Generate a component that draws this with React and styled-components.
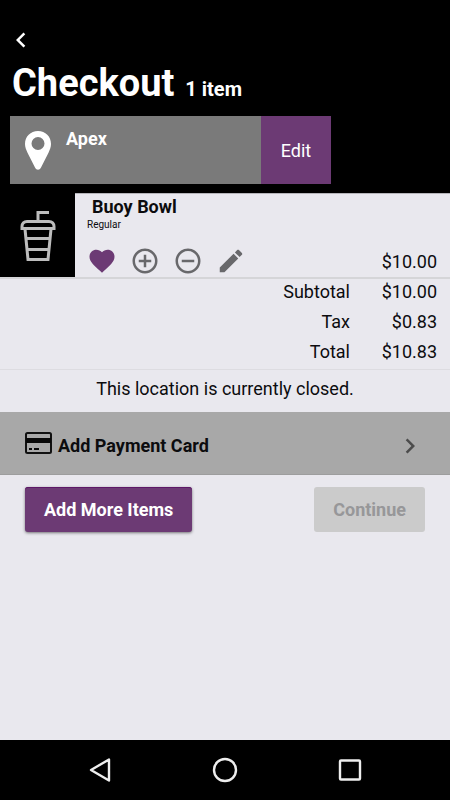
import React from "react";
import styled, { createGlobalStyle } from "styled-components";

const purple = "#6c3a74";
const surface = "#e9e8ee";
const iconGrey = "#68686b";

const GlobalStyle = createGlobalStyle`
  *, *::before, *::after { box-sizing: border-box; }
  body {
    margin: 0;
    background: ${surface};
    color: #0c0c0e;
    font-family: Roboto, "Liberation Sans", sans-serif;
    font-size: 18px;
    line-height: 24px;
  }
  button { font: inherit; color: inherit; border: 0; padding: 0; background: none; cursor: pointer; }
  h1, h2, p { margin: 0; }
  svg { display: block; }
`;

const Screen = styled.div`
  min-height: 100vh;
  display: flex;
  flex-direction: column;
`;

const Header = styled.header`
  background: #000;
  color: #fff;
  padding: 25px 10px 9px;
`;

const BackButton = styled.button`
  display: block;
  margin-left: -4px;
`;

const TitleRow = styled.div`
  display: flex;
  align-items: baseline;
  gap: 11px;
  padding: 4px 2px 9px;
`;

const Title = styled.h1`
  font-size: 38px;
  line-height: 48px;
  font-weight: 700;
`;

const ItemCount = styled.span`
  font-size: 20px;
  font-weight: 700;
`;

const LocationCard = styled.section`
  display: flex;
  width: 75%;
  min-width: 320px;
  max-width: 321px;
  height: 68px;
  background: #7a7a7a;
`;

const LocationInfo = styled.div`
  flex: 1;
  display: flex;
  gap: 14px;
  padding: 11px 14px;
`;

const LocationName = styled.h2`
  font-size: 18px;
  line-height: 24px;
  font-weight: 700;
`;

const EditButton = styled.button`
  width: 70px;
  padding-top: 2px;
  background: ${purple};
`;

const OrderItem = styled.article`
  display: flex;
  border-bottom: 2px solid #d5d5d8;
`;

const Thumbnail = styled.div`
  width: 75px;
  height: 84px;
  display: flex;
  align-items: center;
  justify-content: center;
  background: #000;
`;

const ItemBody = styled.div`
  flex: 1;
  display: flex;
  flex-direction: column;
  justify-content: space-between;
  padding: 1px 13px 0 12px;
  border-top: 1px solid #b5b4b9;
`;

const ItemName = styled.h2`
  font-size: 18px;
  line-height: 24px;
  font-weight: 700;
  padding-left: 5px;
`;

const ItemOption = styled.p`
  font-size: 10px;
  line-height: 12px;
`;

const ItemFooter = styled.div`
  display: flex;
  justify-content: space-between;
  align-items: center;
`;

const Actions = styled.div`
  display: flex;
  gap: 13px;
  padding-bottom: 1px;
`;

const IconButton = styled.button`
  color: ${(p) => (p.$active ? purple : iconGrey)};
`;

const Totals = styled.table`
  width: 100%;
  border-collapse: collapse;
  border-bottom: 1px solid #dddce1;

  th, td {
    height: 30px;
    padding: 0 13px 4px 0;
    font-weight: 400;
    text-align: right;
  }
  th { padding-right: 0; }
  td { width: 100px; }
`;

const Notice = styled.p`
  padding: 7px 12px 11px;
  text-align: center;
`;

const PaymentButton = styled.button`
  display: flex;
  align-items: center;
  width: 100%;
  height: 63px;
  padding: 6px 25px 0;
  background: #a8a8a8;
  border-bottom: 1px solid #9d9d9d;
  font-weight: 700;
`;

const PaymentLabel = styled.span`
  flex: 1;
  padding-left: 6px;
  text-align: left;
`;

const Chevron = styled.span`
  color: #4c4c4c;
`;

const ButtonRow = styled.div`
  display: flex;
  justify-content: space-between;
  padding: 12px 25px;
`;

const ActionButton = styled.button`
  height: 45px;
  padding: 2px 19px 0;
  border-radius: 3px;
  font-weight: 700;
  color: #fff;
  background: ${purple};
  box-shadow: inset 0 1px #5d1767, 0 1px 3px rgba(0, 0, 0, 0.5);

  &:disabled {
    color: #979799;
    background: #cbcbcb;
    box-shadow: none;
    cursor: default;
  }
`;

const SystemBar = styled.nav`
  display: flex;
  justify-content: center;
  align-items: center;
  gap: 95px;
  height: 60px;
  margin-top: auto;
  background: #000;
  color: #eee;
`;

function Glyph({ size = 30, d }) {
  return (
    <svg width={size} height={size} viewBox="0 0 24 24" fill="currentColor" aria-hidden="true">
      <path d={d} />
    </svg>
  );
}

function SystemGlyph({ children }) {
  return (
    <svg width="30" height="30" viewBox="0 0 30 30" fill="none" stroke="currentColor" strokeWidth="2.400" strokeLinejoin="round" aria-hidden="true">
      {children}
    </svg>
  );
}

const PinIcon = () => (
  <svg width="28" height="46" viewBox="0 0 28 46" aria-hidden="true">
    <path
      fill="#fff"
      fillRule="evenodd"
      d="M14 4C6.500 4 1 9.500 1 17c0 3 1.200 6 2.500 8.700L11 40.500c1.500 3 4.500 3 6 0l7.500-14.800C25.800 23 27 20 27 17 27 9.500 21.500 4 14 4Zm0 6a6.500 6.500 0 1 1 0 13 6.500 6.500 0 0 1 0-13Z"
    />
  </svg>
);

const CupIcon = () => (
  <svg width="36" height="52" viewBox="0 0 36 52" fill="none" stroke="#bdbdbd" strokeWidth="3" aria-hidden="true">
    <path d="M18 12V3.500h11" />
    <path d="M2 19.500h32v-2c0-3-2-5-5-5H7c-3 0-5 2-5 5Z" />
    <path d="m5 20 3 30.500h20L31 20M6 29.500h24M7 40.500h22" />
  </svg>
);

const CardIcon = () => (
  <svg width="27" height="28" viewBox="0 0 27 28" aria-hidden="true">
    <rect x="1" y="1" width="25" height="20" rx="1.500" fill="none" stroke="#111" strokeWidth="2" />
    <path d="M1 6h25v5H1zM4 16h3v2H4zM9 16h5v2H9z" fill="#080808" />
  </svg>
);

const icons = {
  heart: "M12 21.350l-1.450-1.320C5.400 15.360 2 12.280 2 8.500 2 5.420 4.420 3 7.500 3c1.740 0 3.410.810 4.500 2.090C13.090 3.810 14.760 3 16.500 3 19.580 3 22 5.420 22 8.500c0 3.780-3.400 6.860-8.550 11.540L12 21.350z",
  plus: "M13 7h-2v4H7v2h4v4h2v-4h4v-2h-4V7zm-1-5C6.480 2 2 6.480 2 12s4.480 10 10 10 10-4.480 10-10S17.520 2 12 2zm0 18c-4.410 0-8-3.590-8-8s3.590-8 8-8 8 3.590 8 8-3.590 8-8 8z",
  minus: "M7 11v2h10v-2H7zm5-9C6.480 2 2 6.480 2 12s4.480 10 10 10 10-4.480 10-10S17.520 2 12 2zm0 18c-4.410 0-8-3.590-8-8s3.590-8 8-8 8 3.590 8 8-3.590 8-8 8z",
  pencil: "M3 17.250V21h3.750L17.810 9.940l-3.750-3.750L3 17.250zM20.710 7.040c.390-.390.390-1.020 0-1.410l-2.340-2.340c-.390-.390-1.020-.390-1.410 0l-1.830 1.830 3.750 3.750 1.830-1.830z",
  back: "M15.410 7.410L14 6l-6 6 6 6 1.410-1.410L10.830 12z",
  forward: "M10 6L8.590 7.410 13.170 12l-4.580 4.590L10 18l6-6z",
};

const actions = [
  { icon: "heart", label: "Favorite", active: true },
  { icon: "plus", label: "Increase quantity" },
  { icon: "minus", label: "Decrease quantity" },
  { icon: "pencil", label: "Edit item" },
];

const totals = [
  ["Subtotal", "$10.00"],
  ["Tax", "$0.83"],
  ["Total", "$10.83"],
];

export default function App() {
  return (
    <Screen>
      <GlobalStyle />
      <Header>
        <BackButton aria-label="Back">
          <Glyph d={icons.back} />
        </BackButton>
        <TitleRow>
          <Title>Checkout</Title>
          <ItemCount>1 item</ItemCount>
        </TitleRow>
        <LocationCard>
          <LocationInfo>
            <PinIcon />
            <LocationName>Apex</LocationName>
          </LocationInfo>
          <EditButton>Edit</EditButton>
        </LocationCard>
      </Header>

      <main>
        <OrderItem>
          <Thumbnail>
            <CupIcon />
          </Thumbnail>
          <ItemBody>
            <div>
              <ItemName>Buoy Bowl</ItemName>
              <ItemOption>Regular</ItemOption>
            </div>
            <ItemFooter>
              <Actions>
                {actions.map((a) => (
                  <IconButton key={a.icon} aria-label={a.label} $active={a.active}>
                    <Glyph d={icons[a.icon]} />
                  </IconButton>
                ))}
              </Actions>
              <span>$10.00</span>
            </ItemFooter>
          </ItemBody>
        </OrderItem>

        <Totals>
          <tbody>
            {totals.map(([label, value]) => (
              <tr key={label}>
                <th scope="row">{label}</th>
                <td>{value}</td>
              </tr>
            ))}
          </tbody>
        </Totals>

        <Notice>This location is currently closed.</Notice>

        <PaymentButton>
          <CardIcon />
          <PaymentLabel>Add Payment Card</PaymentLabel>
          <Chevron>
            <Glyph d={icons.forward} />
          </Chevron>
        </PaymentButton>

        <ButtonRow>
          <ActionButton>Add More Items</ActionButton>
          <ActionButton disabled>Continue</ActionButton>
        </ButtonRow>
      </main>

      <SystemBar>
        <button aria-label="System back">
          <SystemGlyph>
            <path d="M24 4.500v21L6 15Z" />
          </SystemGlyph>
        </button>
        <button aria-label="Home">
          <SystemGlyph>
            <circle cx="15" cy="15" r="11" />
          </SystemGlyph>
        </button>
        <button aria-label="Recent apps">
          <SystemGlyph>
            <rect x="5" y="5.500" width="20" height="19" rx="1" />
          </SystemGlyph>
        </button>
      </SystemBar>
    </Screen>
  );
}
